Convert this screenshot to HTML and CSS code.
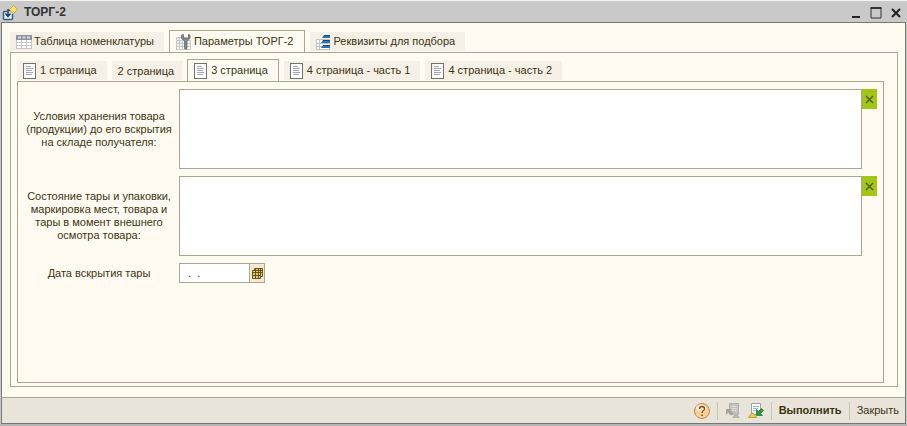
FILE: index.html
```html
<!DOCTYPE html>
<html lang="ru">

<head>
    <meta charset="utf-8">
    <title>ТОРГ-2</title>
    <link rel="stylesheet" href="styles.css">
</head>

<body>
    <!-- shared icon shapes -->
    <svg class="sprite" aria-hidden="true">
        <symbol id="icon-page" viewBox="0 0 13 16">
            <rect x=".5" y=".5" width="12" height="15" fill="#fff" stroke="#6f746d"/>
            <path d="M3 3.500h5M3 5.500h7M3 7.500h6M3 9.500h7M3 11.500h6" stroke="#a2a4b4"/>
        </symbol>
        <symbol id="icon-table" viewBox="0 0 16 16">
            <rect x="1" y="2" width="14" height="12" fill="#fff"/>
            <path d="M.5 5v9.500h15V5M.5 8.500h15M.5 11.500h15M5.500 5v9.500M10.500 5v9.500" fill="none" stroke="#c3c5c8"/>
            <rect x="0" y="1" width="16" height="5" fill="#8f959b"/>
            <path d="M2 3.500h3M6.500 3.500h3M11 3.500h3" stroke="#d5dade" stroke-width="2"/>
        </symbol>
    </svg>

    <div class="window">
        <div class="title-bar">
            <svg class="app-icon" width="16" height="16" viewBox="0 0 16 16" aria-hidden="true">
                <path d="M5 6.500H2.500Q1.500 6.500 1.500 7.500v6q0 1 1 1h7q1 0 1-1V9" fill="#eef4f8" stroke="#2f5f8c" stroke-width="1.500"/>
                <path d="M9 5H6v6M3.500 8.500L6 11.500l2.500-3" fill="none" stroke="#1d3f63" stroke-width="1.500"/>
                <path d="M11.500.5l4 4-4 4-4-4z" fill="#f6e26c" stroke="#c9a92c"/>
            </svg>
            <h1>ТОРГ-2</h1>
            <div class="window-controls">
                <button type="button" aria-label="Свернуть">
                    <svg width="12" height="12" viewBox="0 0 12 12"><path d="M2 10h8" stroke="#222" stroke-width="2"/></svg>
                </button>
                <button type="button" aria-label="Развернуть">
                    <svg width="12" height="12" viewBox="0 0 12 12"><path d="M1 1h10v10H1z" fill="none" stroke="#333"/><path d="M.5 1h11" stroke="#333" stroke-width="2"/></svg>
                </button>
                <button type="button" aria-label="Закрыть окно">
                    <svg width="12" height="12" viewBox="0 0 12 12"><path d="M2 2l8 8M10 2l-8 8" stroke="#222" stroke-width="2"/></svg>
                </button>
            </div>
        </div>

        <div class="content">
            <div class="tabs main-tabs" role="tablist">
                <button type="button" class="tab" role="tab">
                    <svg width="16" height="16" aria-hidden="true"><use href="#icon-table"/></svg>Таблица номенклатуры
                </button>
                <button type="button" class="tab active" role="tab" aria-selected="true">
                    <svg width="16" height="16" viewBox="0 0 16 16" aria-hidden="true">
                        <path d="M.5 3.500h9v12H.5zM.5 6.500h14M.5 9.500h14M.5 12.500h14v3H.5M3.500 3v12M6.500 3v12M14.500 6v9" fill="#fff" stroke="#c5c8c8"/>
                        <path d="M5.500 1v3.500L8.500 7v7.500q1 1.500 2.500 0V7l3-2.500V1l-1.500-.5V4h-5V.5z" fill="#858a8b" stroke="#5b6062" stroke-width=".7"/>
                    </svg>Параметры ТОРГ-2
                </button>
                <button type="button" class="tab" role="tab">
                    <svg width="16" height="16" viewBox="0 0 16 16" aria-hidden="true">
                        <path d="M.5 5.500h13v10H.5zM.5 9.500h13M.5 12.500h13M3.500 5.500v10" fill="#fff" stroke="#c1c4c4"/>
                        <path d="M8 1h6v3H6zM7 6h7v3H5zM7 11h7v3H5z" fill="#2f70b0"/>
                        <path d="M8 1.500h6M7 6.500h7M7 11.500h7" stroke="#184a80"/>
                    </svg>Реквизиты для подбора
                </button>
            </div>

            <div class="panel outer">
                <div class="tabs" role="tablist">
                    <button type="button" class="tab" role="tab">
                        <svg width="13" height="16" aria-hidden="true"><use href="#icon-page"/></svg>1 страница
                    </button>
                    <button type="button" class="tab plain" role="tab">2 страница</button>
                    <button type="button" class="tab active" role="tab" aria-selected="true">
                        <svg width="13" height="16" aria-hidden="true"><use href="#icon-page"/></svg>3 страница
                    </button>
                    <button type="button" class="tab" role="tab">
                        <svg width="13" height="16" aria-hidden="true"><use href="#icon-page"/></svg>4 страница - часть 1
                    </button>
                    <button type="button" class="tab" role="tab">
                        <svg width="13" height="16" aria-hidden="true"><use href="#icon-page"/></svg>4 страница - часть 2
                    </button>
                </div>

                <form class="panel inner" id="torg">
                    <div class="field">
                        <label for="storage">Условия хранения товара (продукции) до его вскрытия на складе получателя:</label>
                        <textarea id="storage"></textarea>
                        <button type="button" class="clear" aria-label="Очистить">
                            <svg width="9" height="9" viewBox="0 0 9 9"><path d="M1 1l7 7M8 1L1 8" stroke="#4c6410" stroke-width="1.500"/></svg>
                        </button>
                    </div>
                    <div class="field">
                        <label for="packaging">Состояние тары и упаковки, маркировка мест, товара и тары в момент внешнего осмотра товара:</label>
                        <textarea id="packaging"></textarea>
                        <button type="button" class="clear" aria-label="Очистить">
                            <svg width="9" height="9" viewBox="0 0 9 9"><path d="M1 1l7 7M8 1L1 8" stroke="#4c6410" stroke-width="1.500"/></svg>
                        </button>
                    </div>
                    <div class="field">
                        <label for="opened">Дата вскрытия тары</label>
                        <input type="text" id="opened" value="  .  .">
                        <button type="button" class="calendar" aria-label="Выбрать дату">
                            <svg width="11" height="11" viewBox="0 0 11 11">
                                <path d="M2.500.5h8v8h-2v2h-8v-8h2z" fill="#e8cf70" stroke="#66521c"/>
                                <path d="M.5 4.500h10M.5 7.500h8M3.500.5v10M6.500.5v10M8.500.5v8M2.500 2.500h8" stroke="#66521c"/>
                            </svg>
                        </button>
                    </div>
                </form>
            </div>
        </div>

        <div class="footer">
            <button type="button" aria-label="Справка">
                <svg width="16" height="16" viewBox="0 0 16 16">
                    <circle cx="8" cy="8" r="7.500" fill="#f8cf96" stroke="#b98850"/>
                    <ellipse cx="7" cy="5" rx="5" ry="3.500" fill="#fdebcf"/>
                    <path d="M5.500 6q0-2.500 2.500-2.500T10.500 6q0 1-1.300 1.800T8 10" fill="none" stroke="#7b4a1c" stroke-width="1.300"/>
                    <path d="M7.200 11.500h1.600v1.500H7.200z" fill="#7b4a1c"/>
                </svg>
            </button>
            <span class="separator"></span>
            <button type="button" aria-label="Восстановить значения" disabled>
                <svg width="16" height="16" viewBox="0 0 16 16">
                    <path d="M4.500.5h9v11h-9z" fill="#c4c2bd" stroke="#b1afaa"/>
                    <path d="M6.500 3.500h5M6.500 5.500h5M6.500 7.500h5" stroke="#e1dfda"/>
                    <path d="M1 6h6L5.500 7.500l3 3-2 2-3-3L1 12z" fill="#a5a3a0"/>
                    <path d="M7 15l3-4h2l3 4z" fill="#b9b6b0"/>
                </svg>
            </button>
            <button type="button" aria-label="Сохранить значения">
                <svg width="16" height="16" viewBox="0 0 16 16">
                    <path d="M3.500.5h9v11h-9z" fill="#fff" stroke="#9aa3a8"/>
                    <path d="M5 3.500h6M5 5.500h5M5 7.500h3" stroke="#9fb4cc"/>
                    <path d="M.5 14.500l3-4h2l3 4z" fill="#f1d54d" stroke="#b99a30"/>
                    <path d="M8.500 6.500v6h6l-2-2L15.500 7.500l-2-2-3 3z" fill="#2c9b35" stroke="#17722a" stroke-width=".7"/>
                </svg>
            </button>
            <span class="separator"></span>
            <button type="submit" form="torg" class="run">Выполнить</button>
            <span class="separator"></span>
            <button type="button">Закрыть</button>
        </div>
    </div>
</body>

</html>
```
FILE: styles.css
```css
* {
    box-sizing: border-box;
}

body {
    margin: 0;
    background-color: #c9c9c9;
    color: #3b3414;
    font-family: "Liberation Sans", Arial, sans-serif;
    font-size: 11px;
    line-height: 13px;
}

button,
input,
textarea {
    font: inherit;
    color: inherit;
    margin: 0;
    border-radius: 0;
}

button {
    display: flex;
    align-items: center;
    justify-content: center;
    padding: 0;
    border: none;
    background: none;
    white-space: nowrap;
}

.sprite {
    display: none;
}

.window {
    display: flex;
    flex-direction: column;
    min-height: 100vh;
    border-top: 1px solid #f4f4f4;
    border-bottom: 2px solid #b5b5b5;
}

.title-bar {
    display: flex;
    align-items: center;
    height: 21px;
    padding: 2px 5px 0 2px;
}

.title-bar h1 {
    flex: 1;
    margin: 0 0 0 6px;
    font-size: 12px;
    color: #333;
}

.window-controls {
    display: flex;
    gap: 8px;
}

.content {
    display: flex;
    flex: 1;
    flex-direction: column;
    margin: 0 1px;
    padding: 7px 7px 10px 8px;
    border: 1px solid #77766f;
    border-bottom-color: #aaa691;
    background-color: #fffbf0;
}

.tabs {
    display: flex;
    align-items: flex-end;
    gap: 5px;
    height: 23px;
    margin-bottom: -1px;
}

.tab {
    gap: 4px;
    height: 19px;
    margin-bottom: 2px;
    padding: 0 10px 0 6px;
    background-color: #f5f0e6;
}

.main-tabs .tab {
    gap: 2px;
}

.tab.plain {
    padding: 2px 8px 0 6px;
}

.tab.active {
    height: 23px;
    margin-bottom: 0;
    padding-bottom: 1px;
    border: 1px solid #aaa691;
    border-bottom: none;
    background-color: #fffbf0;
}

.panel {
    display: flex;
    flex: 1;
    flex-direction: column;
    border: 1px solid #aaa691;
}

.outer {
    padding: 6px 13px 3px 6px;
}

.inner {
    gap: 7px;
    padding: 7px 6px 7px 7px;
}

.field {
    display: flex;
    align-items: flex-start;
}

.field label {
    align-self: center;
    width: 148px;
    margin-right: 6px;
    text-align: center;
}

.field textarea {
    flex: 1;
    height: 80px;
    border: 1px solid #aaa691;
    background-color: #fff;
    resize: none;
}

.field input {
    width: 71px;
    height: 20px;
    padding: 0 2px;
    border: 1px solid #aaa691;
    background-color: #fff;
    white-space: pre;
}

.clear {
    width: 15px;
    height: 20px;
    background-color: #a2c518;
}

.calendar {
    width: 15px;
    height: 20px;
    border: 1px solid #aaa691;
    border-left: none;
    background-color: #f2ead6;
}

.footer {
    display: flex;
    align-items: center;
    justify-content: flex-end;
    gap: 7px;
    height: 26px;
    margin: 0 1px;
    padding: 0 6px;
    border: 1px solid #77766f;
    border-top: none;
    background-color: #e8e4d9;
}

.separator {
    width: 1px;
    height: 18px;
    background-color: #c9c4b4;
}

.run {
    font-weight: bold;
}
```
